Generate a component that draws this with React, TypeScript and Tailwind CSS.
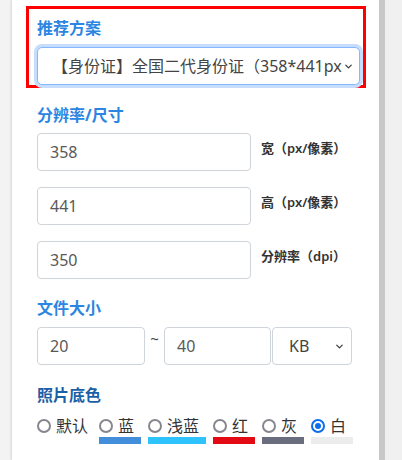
import { ChevronDown } from 'lucide-react'

const cjk = { fontFamily: '"Noto Sans", "Noto Sans CJK SC", sans-serif' }

const inputBase =
  'h-[38px] rounded-[4px] border border-[#ced4da] bg-white px-[12px] text-[16px] leading-[36px] text-[#595959]'

const sizeRows = [
  { value: '358', label: '宽（px/像素）' },
  { value: '441', label: '高（px/像素）' },
  { value: '350', label: '分辨率（dpi）' },
]

const colors = [
  { name: '默认', swatch: null, width: 'w-[55px]' },
  { name: '蓝', swatch: 'bg-[#438edb]', width: 'w-[42px]' },
  { name: '浅蓝', swatch: 'bg-[#2ec3fd]', width: 'w-[58px]' },
  { name: '红', swatch: 'bg-[#e30a14]', width: 'w-[42px]' },
  { name: '灰', swatch: 'bg-[#6a6d7e]', width: 'w-[42px]' },
  { name: '白', swatch: 'bg-[#ececec]', width: 'w-[42px]', checked: true },
]

function Radio({ checked }: { checked?: boolean }) {
  if (checked) {
    return (
      <span className="flex h-[14px] w-[14px] shrink-0 items-center justify-center rounded-full border-[2px] border-[#0b6fe9]">
        <span className="h-[6px] w-[6px] rounded-full bg-[#0b6fe9]" />
      </span>
    )
  }
  return <span className="h-[14px] w-[14px] shrink-0 rounded-full border-[2px] border-[#86868f]" />
}

export default function App() {
  return (
    <div className="flex h-[460px] overflow-hidden bg-[#f3f3f3]" style={cjk}>
      <div className="w-[12px] shrink-0 bg-[#f3f3f3]" />
      <div className="w-[367px] shrink-0 bg-white pt-[6px] shadow-[-1px_0_2px_rgba(0,0,0,0.12)]">
        <div className="ml-[14px] w-[340px] border-[3px] border-[#ff0000] pl-[8px] pt-[7px]">
          <h2 className="text-[16px] font-bold leading-[24px] text-[#2b85e2]">推荐方案</h2>
          <div className="relative mt-[7px] h-[38px] w-[323px] rounded-[5px] border border-[#86b7fe] bg-white shadow-[0_0_0_3px_#c6ddfd]">
            {/* option text is shown cut at the chevron, as the browser draws it */}
            <div className="ml-[14px] whitespace-nowrap text-[16px] leading-[36px] text-[#444]">
              【身份证】全国二代身份证（358*441px
            </div>
            <ChevronDown className="absolute right-[5px] top-[13px] h-[11px] w-[11px] text-[#333]" strokeWidth={2.5} />
          </div>
        </div>

        <div className="pl-[25px]">
          <h2 className="mt-[15px] text-[16px] font-bold leading-[24px] text-[#2b85e2]">分辨率/尺寸</h2>
          <div className="mt-[6px] flex flex-col gap-[16px]">
            {sizeRows.map((row) => (
              <div key={row.label} className="flex items-start">
                <div className={[inputBase, 'w-[214px]'].join(' ')}>{row.value}</div>
                <span className="ml-[10px] mt-[5px] text-[13px] font-semibold leading-[20px] text-[#333]">
                  {row.label}
                </span>
              </div>
            ))}
          </div>

          <h2 className="mt-[17px] text-[16px] font-bold leading-[24px] text-[#2b85e2]">文件大小</h2>
          <div className="mt-[7px] flex items-start">
            <div className={[inputBase, 'w-[108px]'].join(' ')}>20</div>
            <span className="w-[19px] text-center text-[15px] leading-[22px] text-[#444]">~</span>
            <div className={[inputBase, 'w-[107px]'].join(' ')}>40</div>
            <div className="relative ml-px h-[38px] w-[80px] rounded-[4px] border border-[#ced4da] bg-white pl-[16px] text-[16px] leading-[36px] text-[#444]">
              KB
              <ChevronDown className="absolute right-[6px] top-[13px] h-[11px] w-[11px] text-[#333]" strokeWidth={2.5} />
            </div>
          </div>

          <h2 className="mt-[18px] text-[16px] font-bold leading-[24px] text-[#1b5fa8]">照片底色</h2>
          <div className="mt-[9px] flex gap-[7px]">
            {colors.map((c) => (
              <div key={c.name} className={['flex flex-col', c.width].join(' ')}>
                <div className="flex h-[20px] items-center gap-[5px] text-[16px] text-[#333]">
                  <Radio checked={c.checked} />
                  <span className="leading-[20px]">{c.name}</span>
                </div>
                {c.swatch && <div className={['mt-px h-[7px] w-full', c.swatch].join(' ')} />}
              </div>
            ))}
          </div>
        </div>
      </div>
      <div className="w-[6px] shrink-0 bg-[#c8c8c8]" />
      <div className="flex-1 bg-[#f0f0f0]" />
    </div>
  )
}
